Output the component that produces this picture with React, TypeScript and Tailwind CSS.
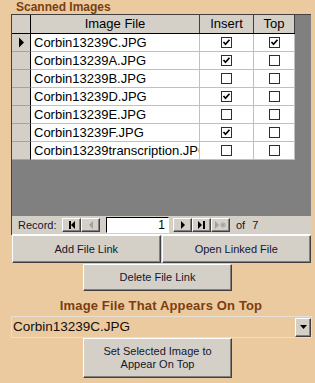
import type { ReactNode } from "react";

const ROWS = [
  { name: "Corbin13239C.JPG", insert: true, top: true },
  { name: "Corbin13239A.JPG", insert: true, top: false },
  { name: "Corbin13239B.JPG", insert: false, top: false },
  { name: "Corbin13239D.JPG", insert: true, top: false },
  { name: "Corbin13239E.JPG", insert: false, top: false },
  { name: "Corbin13239F.JPG", insert: true, top: false },
  { name: "Corbin13239transcription.JPG", insert: false, top: false },
];

const raised =
  "border border-t-white border-l-white border-b-[#404040] border-r-[#404040] shadow-[inset_-1px_-1px_0_#808080] bg-[#D4D0C8]";

function Check({ on }: { on: boolean }) {
  return (
    <span className="flex h-[11px] w-[11px] items-center justify-center border border-[#2e2e2e] bg-white">
      {on && (
        <svg width="9" height="9" viewBox="0 0 9 9">
          <path d="M1.5 4 L3.5 6.2 L7.5 1.8" stroke="#000" strokeWidth="1.7" fill="none" />
        </svg>
      )}
    </span>
  );
}

function NavButton({ children }: { children: ReactNode }) {
  return <div className={`flex h-[14px] w-[19px] items-center justify-center ${raised}`}>{children}</div>;
}

function FormButton({ className, children }: { className: string; children: ReactNode }) {
  return (
    <button className={`flex items-center justify-center text-center text-[11px] leading-[13px] text-[#14142e] ${raised} ${className}`}>
      {children}
    </button>
  );
}

export default function App() {
  return (
    <div className="h-[383px] w-[315px] overflow-hidden bg-[#ECCA9F] font-['Liberation_Sans',Arial,sans-serif]">
      <div className="h-[14px] pl-[16px] text-[12px] font-bold leading-[14px] text-[#7A3E10]">Scanned Images</div>

      {/* datasheet */}
      <div className="ml-[11px] flex h-[221px] w-[300px] flex-col border-l border-t border-l-[#404040] border-t-[#404040] bg-[#808080]">
        <div className="flex-1">
          <div className="flex h-[19px] w-[283px] border-b border-b-black bg-[#D4D0C8] text-[13px] leading-[18px] text-black">
            <div className="w-[19px] border-r border-r-black" />
            <div className="w-[169px] border-r border-r-[#404040] text-center">Image File</div>
            <div className="w-[54px] border-r border-r-[#404040] text-center">Insert</div>
            <div className="w-[41px] border-r border-r-[#404040] text-center">Top</div>
          </div>
          {ROWS.map((row, i) => (
            <div key={row.name} className="flex h-[18px] w-[283px] text-[13px] leading-[17px] text-black">
              <div className="flex w-[19px] items-center justify-center border-r border-b border-r-black border-b-[#A8A49C] bg-[#D4D0C8]">
                {i === 0 && (
                  <svg width="7" height="11" viewBox="0 0 7 11">
                    <path d="M1 0.5 L6 5.5 L1 10.5 Z" fill="#000" />
                  </svg>
                )}
              </div>
              <div className="w-[169px] overflow-hidden whitespace-nowrap border-r border-b border-[#C0C0C0] bg-white pl-[3px]">
                {row.name}
              </div>
              <div className="flex w-[54px] items-center justify-center border-r border-b border-[#C0C0C0] bg-white">
                <Check on={row.insert} />
              </div>
              <div className="flex w-[41px] items-center justify-center border-r border-b border-[#C0C0C0] bg-white">
                <Check on={row.top} />
              </div>
            </div>
          ))}
        </div>

        {/* record navigator */}
        <div className="flex h-[19px] items-center border-b border-b-white bg-[#D4D0C8] pl-[6px] text-[11px] text-[#14142e]">
          <span className="w-[44px]">Record:</span>
          <NavButton>
            <svg width="8" height="8" viewBox="0 0 8 8">
              <rect x="1" y="0" width="2" height="8" fill="#000" />
              <path d="M7 0 L3 4 L7 8 Z" fill="#000" />
            </svg>
          </NavButton>
          <NavButton>
            <svg width="8" height="8" viewBox="0 0 8 8">
              <path d="M6 0 L2 4 L6 8 Z" fill="#A0A0A0" />
            </svg>
          </NavButton>
          <div className="ml-[6px] mr-[4px] h-[16px] w-[63px] border border-t-black border-l-black border-b-white border-r-white bg-white pr-[3px] text-right text-[12px] leading-[14px] text-black">
            1
          </div>
          <NavButton>
            <svg width="8" height="8" viewBox="0 0 8 8">
              <path d="M2 0 L6 4 L2 8 Z" fill="#000" />
            </svg>
          </NavButton>
          <NavButton>
            <svg width="8" height="8" viewBox="0 0 8 8">
              <path d="M0 0 L4 4 L0 8 Z" fill="#000" />
              <rect x="5" y="0" width="2" height="8" fill="#000" />
            </svg>
          </NavButton>
          <NavButton>
            <svg width="12" height="8" viewBox="0 0 12 8">
              <path d="M0 0 L4 4 L0 8 Z" fill="#A0A0A0" />
              <path d="M8 1 V7 M5 4 H11 M6 2 L10 6 M10 2 L6 6" stroke="#A0A0A0" strokeWidth="1" />
            </svg>
          </NavButton>
          <span className="ml-[6px]">of</span>
          <span className="ml-[7px]">7</span>
        </div>
      </div>

      <div className="ml-[12px] flex w-[299px] gap-[1px]">
        <FormButton className="h-[28px] w-[149px]">Add File Link</FormButton>
        <FormButton className="h-[28px] w-[150px]">Open Linked File</FormButton>
      </div>

      <div className="mt-[1px] flex justify-center pl-[8px] pr-[8px]">
        <FormButton className="h-[27px] w-[149px]">Delete File Link</FormButton>
      </div>

      <div className="ml-[11px] h-[25px] w-[300px] pt-[7px] text-center text-[13px] font-bold leading-[15px] tracking-[0.15px] text-[#7A3E10]">
        Image File That Appears On Top
      </div>

      <div className="ml-[11px] flex h-[22px] w-[301px] items-center border border-[#E6DFD5]">
        <span className="flex-1 pl-[1px] text-[13.5px] leading-[20px] text-[#101010]">Corbin13239C.JPG</span>
        <div className={`flex h-[19px] w-[16px] items-center justify-center ${raised}`}>
          <svg width="7" height="4" viewBox="0 0 7 4">
            <path d="M0 0 H7 L3.5 4 Z" fill="#000" />
          </svg>
        </div>
      </div>

      <div className="flex justify-center pl-[8px] pr-[8px]">
        <FormButton className="h-[40px] w-[149px]">
          Set Selected Image to
          <br />
          Appear On Top
        </FormButton>
      </div>
    </div>
  );
}
